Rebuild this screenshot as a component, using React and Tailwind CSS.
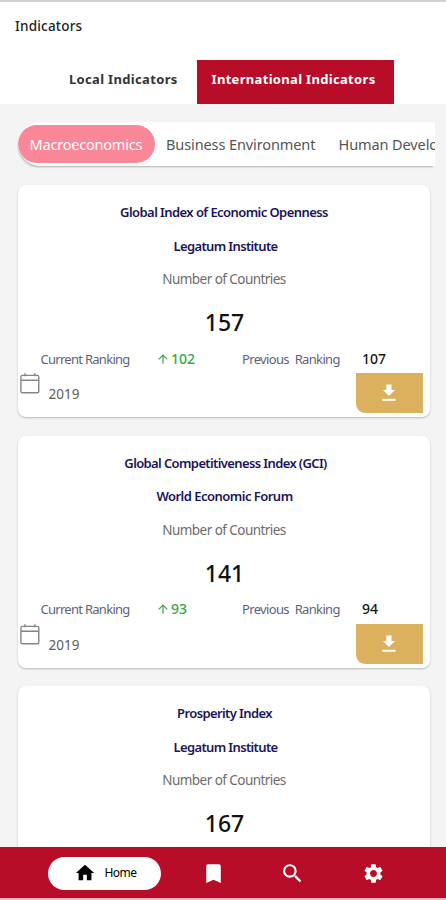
import React from 'react';
import {
  MdHome,
  MdBookmark,
  MdSearch,
  MdSettings,
  MdArrowUpward,
} from 'react-icons/md';

const cards = [
  {
    title: 'Global Index of Economic Openness',
    titleClass: 'tracking-[-0.57px]',
    source: 'Legatum Institute',
    sourceClass: 'pl-[3px] tracking-[-0.63px]',
    countries: '157',
    current: '102',
    previous: '107',
    year: '2019',
  },
  {
    title: 'Global Competitiveness Index (GCI)',
    titleClass: 'pl-[3px] tracking-[-0.62px]',
    source: 'World Economic Forum',
    sourceClass: 'pl-[1px] tracking-[-0.52px]',
    countries: '141',
    current: '93',
    previous: '94',
    year: '2019',
  },
  {
    title: 'Prosperity Index',
    titleClass: 'pl-[1px] tracking-[-0.6px]',
    source: 'Legatum Institute',
    sourceClass: 'pl-[3px] tracking-[-0.63px]',
    countries: '167',
  },
];

function CalendarIcon() {
  return (
    <svg width="20" height="21" viewBox="0 0 20 21" fill="none" stroke="#858585" strokeWidth="1.4">
      <rect x="0.9" y="2.4" width="17.9" height="17.4" rx="1.6" />
      <path d="M1 7.3H18.7M5 0.3V3.2M14.8 0.3V3.2" />
    </svg>
  );
}

function DownloadIcon() {
  return (
    <svg width="14" height="18" viewBox="0 0 14 18" fill="#fff">
      <path d="M4.3 0.5H9.5V5.9H13L6.9 12.1L0.9 5.9H4.3Z" />
      <rect x="0.2" y="14.8" width="13.4" height="2" />
    </svg>
  );
}

function Rankings({ card }) {
  return (
    <>
      <div className="mt-[11.5px] flex h-5 text-[13px] leading-5 whitespace-nowrap">
        <span className="w-[116px] pl-[22.5px] tracking-[-0.72px] text-[#625f7c]">Current Ranking</span>
        <span className="flex w-[86px] items-center pl-[22px] text-[14px] font-medium text-[#35a846]">
          <MdArrowUpward className="mr-[1px] size-[14px]" />
          {card.current}
        </span>
        <span className="w-[118px] pl-[22px] tracking-[-0.65px] [word-spacing:3px] text-[#625f7c]">Previous Ranking</span>
        <span className="pl-[24px] text-[14px] font-medium text-[#161616]">{card.previous}</span>
      </div>
      <div className="mt-[4.5px] flex h-[40px]">
        <div className="pl-[1.5px]">
          <CalendarIcon />
        </div>
        <span className="mt-[11px] ml-[9px] text-[13.5px] leading-5 text-[#5c5c5c]">{card.year}</span>
        <button className="mr-[7px] ml-auto flex w-[67.5px] items-center justify-center rounded-bl-[9px] bg-[#dbb15d]">
          <DownloadIcon />
        </button>
      </div>
    </>
  );
}

function Card({ card }) {
  return (
    <article className="flex h-[232px] w-[412px] shrink-0 flex-col rounded-[8px] bg-white pt-[17px] shadow-[0_1px_2px_rgba(0,0,0,0.25)]">
      <h2 className={`h-5 text-center text-[13px] leading-5 font-semibold text-[#1c1458] ${card.titleClass}`}>{card.title}</h2>
      <p className={`mt-[13.5px] h-5 text-center text-[13px] leading-5 font-semibold text-[#1c1458] ${card.sourceClass}`}>{card.source}</p>
      <p className="mt-[13.5px] h-5 text-center text-[13.5px] leading-5 tracking-[-0.55px] text-[#6c6c6c]">Number of Countries</p>
      <p className="mt-[18px] h-[30px] pl-[1px] text-center text-[23px] leading-[30px] font-medium text-[#111]">{card.countries}</p>
      {card.current && <Rankings card={card} />}
    </article>
  );
}

export default function App() {
  return (
    <div className="flex h-[900px] w-[446px] flex-col overflow-hidden bg-[#f4f4f4] font-['Noto_Sans',sans-serif]">
      <header className="h-[104px] shrink-0 border-t-2 border-[#d3d3d3] bg-white">
        <h1 className="h-[58px] pt-[13.5px] pl-[15px] text-[13.5px] leading-5 font-medium tracking-[0.2px] text-[#222]">Indicators</h1>
        <nav className="flex h-[44px] text-[13px] leading-[39px] font-bold whitespace-nowrap">
          <span className="w-[197px] pl-[69px] tracking-[0.33px] text-[#333]">Local Indicators</span>
          <span className="w-[197px] bg-[#b70d29] pl-[14.5px] tracking-[0.32px] text-white">International Indicators</span>
        </nav>
      </header>

      <div className="mt-[18px] ml-[18px] flex h-[44px] w-[417px] shrink-0 overflow-hidden rounded-l-[22px] bg-white text-[14.5px] whitespace-nowrap text-[#555] shadow-[-1px_2px_2px_-1px_rgba(0,0,0,0.28)]">
        <span className="mt-[3px] h-[38px] w-[136.5px] shrink-0 rounded-full bg-[#fa8797] pl-[11.5px] leading-[38px] tracking-[-0.2px] text-white">Macroeconomics</span>
        <span className="w-[172.5px] shrink-0 pl-[11.5px] leading-[44px] tracking-[-0.1px]">Business Environment</span>
        <span className="shrink-0 pl-[11.5px] leading-[44px] tracking-[-0.1px]">Human Development</span>
      </div>

      <main className="flex min-h-0 flex-1 flex-col gap-[18.5px] overflow-hidden pt-[19px] pl-[18px]">
        {cards.map((card) => (
          <Card key={card.title} card={card} />
        ))}
      </main>

      <footer className="flex h-[53px] shrink-0 items-start border-b-2 border-[#e9b9c0] bg-[#b70d29] pt-[9.5px] text-white">
        <div className="ml-[48px] flex h-[33.5px] w-[112.5px] items-center rounded-full bg-white pl-[26px] text-black">
          <MdHome className="size-[22px]" />
          <span className="ml-[8.5px] text-[12px] leading-5 tracking-[-0.55px]">Home</span>
        </div>
        <MdBookmark className="mt-[4px] ml-[40px] size-[25px]" />
        <MdSearch className="mt-[4px] ml-[54.5px] size-[25px]" />
        <MdSettings className="mt-[5px] ml-[56.5px] size-[23px]" />
      </footer>
    </div>
  );
}
